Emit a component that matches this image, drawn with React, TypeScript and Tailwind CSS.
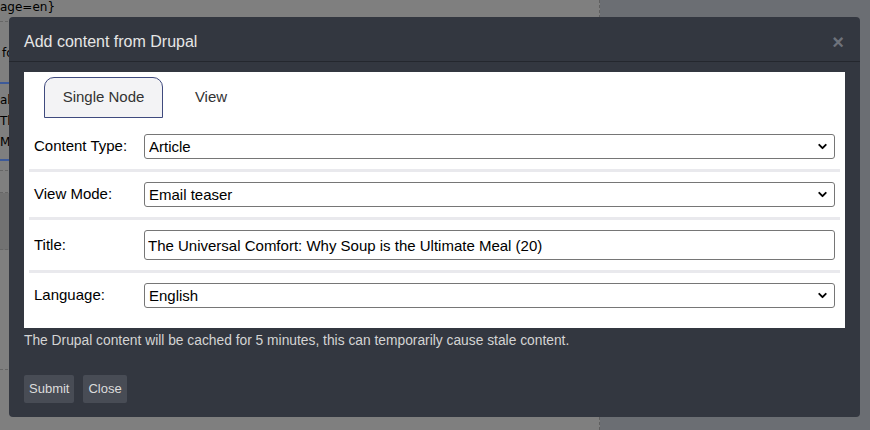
import { ChevronDown } from "lucide-react";

const rows = [
  { label: "Content Type:", value: "Article", kind: "select" },
  { label: "View Mode:", value: "Email teaser", kind: "select" },
  { label: "Title:", value: "The Universal Comfort: Why Soup is the Ultimate Meal (20)", kind: "input" },
  { label: "Language:", value: "English", kind: "select" },
];

function Field({ label, value, kind }: { label: string; value: string; kind: string }) {
  return (
    <div className="flex items-center px-[5px] py-[10px] border-b-[3px] border-[#e9e9ed] last:border-b-0 first:pt-[16px]">
      <label className="w-[110px] shrink-0 text-[15px] text-black">{label}</label>
      {kind === "select" ? (
        <div className="relative flex-1">
          <select
            defaultValue={value}
            className="block w-full h-[25px] appearance-none rounded-[3px] border border-[#767676] bg-white pl-[4px] text-[15px] leading-[20px] text-black"
          >
            <option>{value}</option>
          </select>
          <ChevronDown
            strokeWidth={3.5}
            className="pointer-events-none absolute right-[6px] top-[6px] w-[13px] h-[13px] text-black"
          />
        </div>
      ) : (
        <input
          defaultValue={value}
          className="block flex-1 h-[30px] rounded-[3px] border border-[#767676] bg-white pl-[3px] text-[15px] text-black"
        />
      )}
    </div>
  );
}

export default function App() {
  return (
    <div className="relative w-[870px] h-[430px] overflow-hidden font-['Liberation_Sans',Arial,sans-serif] bg-[#6b6e73]">
      {/* page behind the overlay */}
      <div className="flex h-full">
        <div className="w-[600px] h-full bg-[#7f7f7f] border-r border-dashed border-[#5f5f5f] font-['DejaVu_Sans',sans-serif] text-[12px] text-black">
          <div className="h-[22px] border-b border-dashed border-[#666] pl-0 leading-[14px]">{"age=en}"}</div>
          <div className="h-[60px] pt-[22px] pl-[2px]">fo</div>
          <div className="border-y-2 border-[#3d5a99] py-[6px] leading-[21px]">
            <div>al</div>
            <div>Th</div>
            <div>Mo</div>
          </div>
          <div className="h-[10px] border-b border-dashed border-[#666]" />
          <div className="h-[22px] border-b border-dashed border-[#666]" />
          <div className="h-[57px] bg-[#727272] border-b border-dashed border-[#666]" />
          <div className="h-[120px] border-b border-dashed border-[#666]" />
        </div>
        <div className="flex-1" />
      </div>

      {/* dialog */}
      <div className="absolute left-[9px] top-[17px] w-[851px] h-[400px] rounded-[4px] bg-[#333740] flex flex-col">
        <div className="flex items-center justify-between h-[45px] border-b border-[#24272e] pt-[6px] pl-[15px] pr-[16px]">
          <span className="text-[16px] text-[#e6e6e6]">Add content from Drupal</span>
          <span className="text-[20px] font-bold leading-none text-[#6e727b]">×</span>
        </div>

        <div className="mx-[15px] mt-[10px] bg-white px-[5px] pt-[5px] pb-[10px]">
          <div className="flex items-end pl-[15px]">
            <div className="w-[119px] h-[41px] flex items-center justify-center rounded-t-[10px] border border-[#3f4a7e] bg-[#f3f3f5] text-[15px] text-[#333]">
              Single Node
            </div>
            <div className="w-[96px] h-[41px] flex items-center justify-center text-[15px] text-[#333]">
              View
            </div>
          </div>
          <div>
            {rows.map((r) => (
              <Field key={r.label} {...r} />
            ))}
          </div>
        </div>

        <p className="px-[15px] pt-[3px] text-[13.8px] text-[#d4d4d4]">
          The Drupal content will be cached for 5 minutes, this can temporarily cause stale content.
        </p>

        <div className="flex gap-[9px] px-[15px] mt-auto mb-[14px]">
          <button className="h-[28px] px-[5px] rounded-[2px] bg-[#484c55] text-[13px] text-[#dcdcdc]">Submit</button>
          <button className="h-[28px] px-[5px] rounded-[2px] bg-[#484c55] text-[13px] text-[#dcdcdc]">Close</button>
        </div>
      </div>
    </div>
  );
}
